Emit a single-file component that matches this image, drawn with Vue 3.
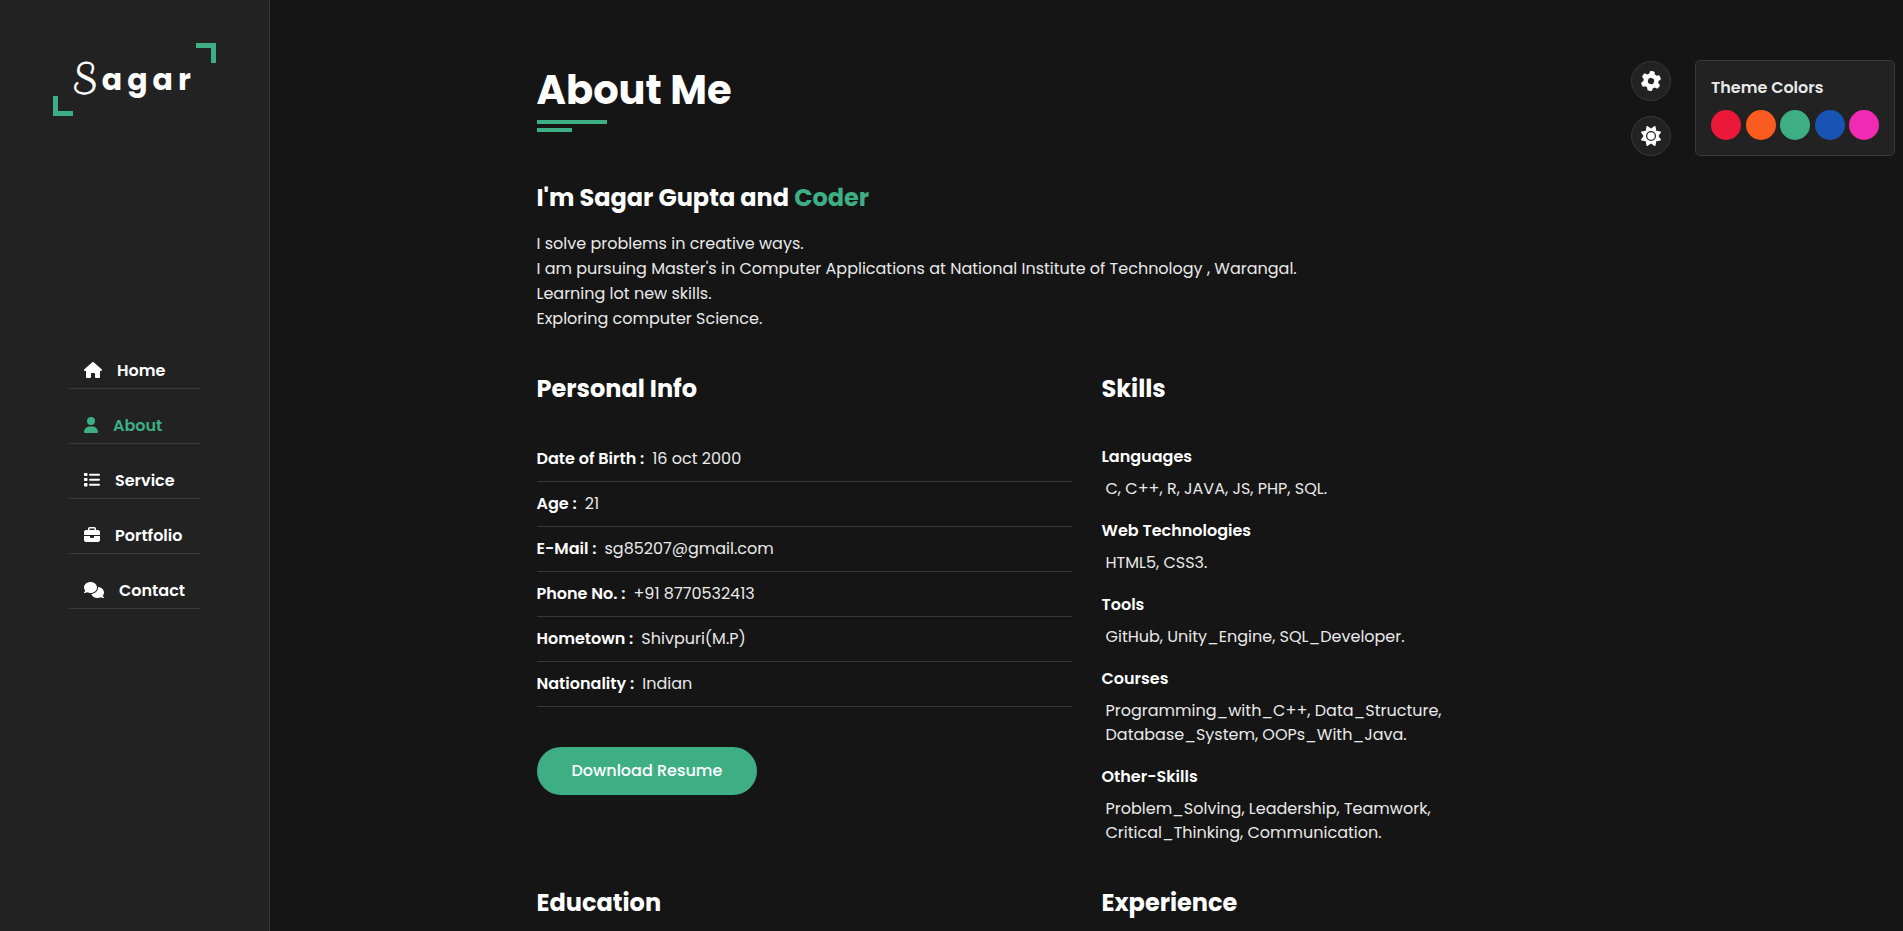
<script setup>
import { ref } from 'vue'

const navItems = [
  {
    label: 'Home', id: 'home', w: 576, size: 'i-18',
    d: 'M575.8 255.5c0 18-15 32.1-32 32.1h-32l.7 160.2c0 2.7-.2 5.4-.5 8.1V472c0 22.1-17.9 40-40 40H456c-1.1 0-2.2 0-3.3-.1c-1.4 .1-2.8 .1-4.2 .1H416 392c-22.1 0-40-17.9-40-40V448 384c0-17.7-14.3-32-32-32H256c-17.7 0-32 14.3-32 32v64 24c0 22.1-17.9 40-40 40H160 128.1c-1.5 0-3-.1-4.5-.2c-1.2 .1-2.4 .2-3.6 .2H104c-22.1 0-40-17.9-40-40V360c0-.9 0-1.9 .1-2.8V287.6H32c-18 0-32-14-32-32.1c0-9 3-17 10-24L266.4 8c7-7 15-8 22-8s15 2 21 7L564.8 231.5c8 7 12 15 11 24z'
  },
  {
    label: 'About', id: 'about', w: 448, size: 'i-14',
    d: 'M224 256A128 128 0 1 0 224 0a128 128 0 1 0 0 256zm-45.7 48C79.8 304 0 383.8 0 482.3C0 498.7 13.3 512 29.7 512H418.3c16.4 0 29.7-13.3 29.7-29.7C448 383.8 368.2 304 269.7 304H178.3z'
  },
  {
    label: 'Service', id: 'services', w: 512, size: 'i-16',
    d: 'M24 32h64a24 24 0 0 1 24 24v48a24 24 0 0 1-24 24H24A24 24 0 0 1 0 104V56a24 24 0 0 1 24-24zm0 160h64a24 24 0 0 1 24 24v48a24 24 0 0 1-24 24H24A24 24 0 0 1 0 264v-48a24 24 0 0 1 24-24zm0 160h64a24 24 0 0 1 24 24v64a24 24 0 0 1-24 24H24A24 24 0 0 1 0 440v-64a24 24 0 0 1 24-24zM192 56H480a32 32 0 0 1 0 64H192a32 32 0 0 1 0-64zm0 160H480a32 32 0 0 1 0 64H192a32 32 0 0 1 0-64zm0 160H480a32 32 0 0 1 0 64H192a32 32 0 0 1 0-64z'
  },
  {
    label: 'Portfolio', id: 'portfolio', w: 512, size: 'i-16',
    d: 'M184 48H328c4.4 0 8 3.6 8 8V96H176V56c0-4.4 3.6-8 8-8zm-56 8V96H64C28.7 96 0 124.7 0 160v96H192 320 512V160c0-35.3-28.7-64-64-64H384V56c0-30.9-25.1-56-56-56H184c-30.9 0-56 25.1-56 56zM512 288H320v32c0 17.7-14.3 32-32 32H224c-17.7 0-32-14.3-32-32V288H0V416c0 35.3 28.7 64 64 64H448c35.3 0 64-28.7 64-64V288z'
  },
  {
    label: 'Contact', id: 'contact', w: 640, size: 'i-20',
    d: 'M208 352c114.9 0 208-78.8 208-176S322.9 0 208 0S0 78.8 0 176c0 38.6 14.7 74.3 39.6 103.4c-3.5 9.4-8.7 17.7-14.2 24.7c-4.8 6.2-9.7 11-13.3 14.3c-1.8 1.6-3.3 2.9-4.3 3.7c-.5 .4-.9 .7-1.1 .8l-.2 .2C1 327.2-1.4 334.4 .8 340.9S9.1 352 16 352c21.8 0 43.8-5.6 62.1-12.5c9.2-3.5 17.8-7.4 25.2-11.4C134.1 343.3 169.8 352 208 352zM448 176c0 112.3-99.1 196.9-216.5 207C255.8 457.4 336.4 512 432 512c38.2 0 73.9-8.7 104.7-23.9c7.5 4 16 7.9 25.2 11.4c18.3 6.9 40.3 12.5 62.1 12.5c6.9 0 13.1-4.5 15.2-11.1c2.1-6.6-.2-13.8-5.8-17.9l-.2-.2c-.2-.2-.6-.4-1.1-.8c-1-.8-2.5-2-4.3-3.7c-3.6-3.3-8.5-8.1-13.3-14.3c-5.5-7-10.7-15.4-14.2-24.7c24.9-29 39.6-64.7 39.6-103.4c0-92.8-84.9-168.9-192.6-175.5c.4 5.1 .6 10.3 .6 15.5z'
  }
]

const personal = [
  ['Date of Birth :', '16 oct 2000'],
  ['Age :', '21'],
  ['E-Mail :', 'sg85207@gmail.com'],
  ['Phone No. :', '+91 8770532413'],
  ['Hometown :', 'Shivpuri(M.P)'],
  ['Nationality :', 'Indian']
]

const skills = [
  ['Languages', ['C, C++, R, JAVA, JS, PHP, SQL.']],
  ['Web Technologies', ['HTML5, CSS3.']],
  ['Tools', ['GitHub, Unity_Engine, SQL_Developer.']],
  ['Courses', ['Programming_with_C++, Data_Structure,', 'Database_System, OOPs_With_Java.']],
  ['Other-Skills', ['Problem_Solving, Leadership, Teamwork,', 'Critical_Thinking, Communication.']]
]

const colors = [
  ['Red', '#ec1839'],
  ['Orange', '#fa5b1f'],
  ['Green', '#3eaf85'],
  ['Blue', '#1854b4'],
  ['Pink', '#f02ab2']
]

const skin = ref('#3eaf85')
const active = ref('About')
const panelOpen = ref(true)
</script>

<template>
  <div class="page" :style="{ '--skin': skin }">
    <aside class="sidebar">
      <div class="logo-area">
        <a class="logo" href="#about"><span class="initial">S</span>agar</a>
      </div>
      <nav class="nav">
        <a
          v-for="item in navItems"
          :key="item.id"
          :href="'#' + item.id"
          class="nav-link"
          :class="{ active: active === item.label }"
          @click="active = item.label"
        >
          <svg :class="item.size" :viewBox="`0 0 ${item.w} 512`" aria-hidden="true"><path :d="item.d" /></svg>
          <span>{{ item.label }}</span>
        </a>
      </nav>
    </aside>

    <main class="main">
      <div class="container">
        <h1 class="title">About Me</h1>
        <h2 class="heading">I'm Sagar Gupta and <span class="accent">Coder</span></h2>
        <p class="intro">
          I solve problems in creative ways.<br>
          I am pursuing Master's in Computer Applications at National Institute of Technology , Warangal.<br>
          Learning lot new skills.<br>
          Exploring computer Science.
        </p>

        <div class="columns">
          <section>
            <h2 class="heading">Personal Info</h2>
            <dl class="info">
              <div v-for="[term, value] in personal" :key="term" class="info-row">
                <dt>{{ term }}</dt>
                <dd>{{ value }}</dd>
              </div>
            </dl>
            <a class="btn" href="#resume">Download Resume</a>
          </section>
          <section>
            <h2 class="heading">Skills</h2>
            <div class="skills">
              <div v-for="[name, lines] in skills" :key="name" class="skill">
                <h3>{{ name }}</h3>
                <p><span v-for="line in lines" :key="line">{{ line }}</span></p>
              </div>
            </div>
          </section>
          <h2 class="heading">Education</h2>
          <h2 class="heading">Experience</h2>
        </div>
      </div>
    </main>

    <div class="switcher">
      <div class="toggles">
        <button class="round" type="button" aria-label="Theme colors" @click="panelOpen = !panelOpen">
          <svg class="i-20 gear" viewBox="0 0 512 512" aria-hidden="true"><path d="M495.9 166.6c3.2 8.7 .5 18.4-6.4 24.6l-43.3 39.4c1.1 8.3 1.7 16.8 1.7 25.4s-.6 17.1-1.7 25.4l43.3 39.4c6.9 6.2 9.6 15.9 6.4 24.6c-4.4 11.9-9.7 23.3-15.8 34.3l-4.7 8.1c-6.6 11-14 21.4-22.1 31.2c-5.9 7.2-15.7 9.6-24.5 6.8l-55.7-17.7c-13.4 10.3-28.2 18.9-44 25.4l-12.5 57.1c-2 9.1-9 16.3-18.2 17.8c-13.8 2.3-28 3.5-42.5 3.5s-28.7-1.2-42.5-3.5c-9.2-1.5-16.2-8.7-18.2-17.8l-12.5-57.1c-15.8-6.5-30.6-15.1-44-25.4L83.1 425.9c-8.8 2.8-18.6 .3-24.5-6.8c-8.1-9.8-15.5-20.2-22.1-31.2l-4.7-8.1c-6.1-11-11.4-22.4-15.8-34.3c-3.2-8.7-.5-18.4 6.4-24.6l43.3-39.4C64.6 273.1 64 264.6 64 256s.6-17.1 1.7-25.4L22.4 191.2c-6.9-6.2-9.6-15.9-6.4-24.6c4.4-11.9 9.7-23.3 15.8-34.3l4.7-8.1c6.6-11 14-21.4 22.1-31.2c5.9-7.2 15.7-9.6 24.5-6.8l55.7 17.7c13.4-10.3 28.2-18.9 44-25.4l12.5-57.1c2-9.1 9-16.3 18.2-17.8C227.3 1.2 241.5 0 256 0s28.7 1.2 42.5 3.5c9.2 1.5 16.2 8.7 18.2 17.8l12.5 57.1c15.8 6.5 30.6 15.1 44 25.4l55.7-17.7c8.8-2.8 18.6-.3 24.5 6.8c8.1 9.8 15.5 20.2 22.1 31.2l4.7 8.1c6.1 11 11.4 22.4 15.8 34.3zM256 336a80 80 0 1 0 0-160 80 80 0 1 0 0 160z" /></svg>
        </button>
        <button class="round" type="button" aria-label="Light mode">
          <svg class="i-20" viewBox="0 0 512 512" aria-hidden="true"><path d="M361.5 1.2c5 2.1 8.6 6.6 9.6 11.9L391 121l107.9 19.8c5.3 1 9.8 4.6 11.9 9.6s1.5 10.7-1.6 15.2L446.9 256l62.3 90.3c3.1 4.5 3.7 10.2 1.6 15.2s-6.6 8.6-11.9 9.6L391 391 371.1 498.9c-1 5.3-4.6 9.8-9.6 11.9s-10.7 1.5-15.2-1.6L256 446.9l-90.3 62.3c-4.5 3.1-10.2 3.7-15.2 1.6s-8.6-6.6-9.6-11.9L121 391 13.1 371.1c-5.3-1-9.8-4.6-11.9-9.6s-1.5-10.7 1.6-15.2L65.1 256 2.8 165.7c-3.1-4.5-3.7-10.2-1.6-15.2s6.6-8.6 11.9-9.6L121 121 140.9 13.1c1-5.3 4.6-9.8 9.6-11.9s10.7-1.5 15.2 1.6L256 65.1 346.3 2.8c4.5-3.1 10.2-3.7 15.2-1.6zM160 256a96 96 0 1 1 192 0 96 96 0 1 1 -192 0zm224 0a128 128 0 1 0 -256 0 128 128 0 1 0 256 0z" /></svg>
        </button>
      </div>
      <div v-if="panelOpen" class="panel">
        <h2>Theme Colors</h2>
        <div class="swatches">
          <button
            v-for="[name, value] in colors"
            :key="name"
            type="button"
            class="swatch"
            :aria-label="name"
            :style="{ background: value }"
            @click="skin = value"
          />
        </div>
      </div>
    </div>
  </div>
</template>

<style>
body {
  margin: 0;
  background: #151515;
}
</style>

<style scoped>
.page {
  display: flex;
  min-height: 100vh;
  background: #151515;
  color: #e9e9e9;
  font-family: Poppins, Inter, sans-serif;
  font-size: 16px;
  line-height: 24px;
}

.page *,
.page *::before,
.page *::after {
  box-sizing: border-box;
}

h1, h2, h3, p, dl, dd {
  margin: 0;
}

a {
  color: inherit;
  text-decoration: none;
}

svg {
  height: 16px;
  fill: currentColor;
  flex: none;
}

.i-14 { width: 14px; }
.i-16 { width: 16px; }
.i-18 { width: 18px; }
.i-20 { width: 20px; }

.sidebar {
  position: sticky;
  top: 0;
  display: grid;
  grid-template-rows: 1fr auto 1fr;
  justify-items: center;
  flex: none;
  width: 270px;
  height: 100vh;
  background: #222;
  border-right: 1px solid #393939;
}

.logo-area {
  padding-top: 43px;
}

.logo {
  position: relative;
  display: flex;
  align-items: center;
  justify-content: center;
  width: 163px;
  height: 73px;
  color: #fff;
  font-size: 30px;
  font-weight: 700;
  letter-spacing: 5px;
}

.initial {
  font-family: 'Clicker Script', Lato, sans-serif;
  font-size: 40px;
}

.logo::before,
.logo::after {
  content: '';
  position: absolute;
  width: 20px;
  height: 20px;
}

.logo::before {
  left: 0;
  bottom: 0;
  border-left: 5px solid var(--skin);
  border-bottom: 5px solid var(--skin);
}

.logo::after {
  right: 0;
  top: 0;
  border-right: 5px solid var(--skin);
  border-top: 5px solid var(--skin);
}

.nav {
  display: flex;
  flex-direction: column;
  gap: 20px;
  padding: 52px 0 20px;
}

.nav-link {
  display: flex;
  align-items: center;
  gap: 15px;
  min-width: 131px;
  height: 35px;
  padding: 0 15px;
  border-bottom: 1px solid #393939;
  color: #fff;
  font-weight: 600;
}

.nav-link svg {
  margin-bottom: 2px;
}

.nav-link.active,
.accent {
  color: var(--skin);
}

.main {
  flex: 1;
  min-width: 0;
  padding: 60px 30px 10px;
}

.container {
  max-width: 1100px;
  margin: 0 auto;
}

.title {
  position: relative;
  margin-bottom: 63px;
  color: #fff;
  font-size: 40px;
  font-weight: 700;
  line-height: 60px;
}

.title::before,
.title::after {
  content: '';
  position: absolute;
  left: 0;
  height: 4px;
  background: var(--skin);
}

.title::before {
  top: 60px;
  width: 70px;
}

.title::after {
  top: 68px;
  width: 35px;
}

.heading {
  color: #fff;
  font-size: 24px;
  font-weight: 700;
  line-height: 30px;
}

.intro {
  margin: 18px 0 43px;
  line-height: 25px;
}

.columns {
  display: grid;
  grid-template-columns: 1fr 1fr;
  gap: 43px 30px;
}

.info {
  margin: 33px 0 40px;
}

.info-row {
  display: flex;
  gap: 8px;
  padding: 10px 0;
  border-bottom: 1px solid #393939;
}

dt {
  color: #fff;
  font-weight: 600;
}

.btn {
  display: inline-block;
  padding: 12px 35px;
  border-radius: 24px;
  background: var(--skin);
  color: #fff;
  font-weight: 500;
}

.skills {
  display: grid;
  gap: 18px;
  margin-top: 41px;
}

.skill h3 {
  margin-bottom: 8px;
  color: #fff;
  font-size: 16px;
  font-weight: 600;
}

.skill p {
  padding-left: 4px;
}

.skill span {
  display: block;
}

.switcher {
  position: fixed;
  top: 60px;
  right: 8px;
  display: flex;
  gap: 24px;
}

.toggles {
  display: grid;
  gap: 15px;
  align-content: end;
}

.round {
  display: grid;
  place-items: center;
  width: 40px;
  height: 40px;
  padding: 0;
  border: 1px solid #393939;
  border-radius: 50%;
  background: #222;
  color: #fff;
  cursor: pointer;
}

.round svg {
  height: 20px;
}

.gear {
  transform: rotate(8deg);
}

.panel {
  width: 200px;
  padding: 15px;
  border: 1px solid #393939;
  border-radius: 5px;
  background: #222;
}

.panel h2 {
  margin-bottom: 10px;
  font-size: 16px;
  font-weight: 600;
}

.swatches {
  display: flex;
  justify-content: space-between;
}

.swatch {
  width: 30px;
  height: 30px;
  padding: 0;
  border: 0;
  border-radius: 50%;
  cursor: pointer;
}
</style>
